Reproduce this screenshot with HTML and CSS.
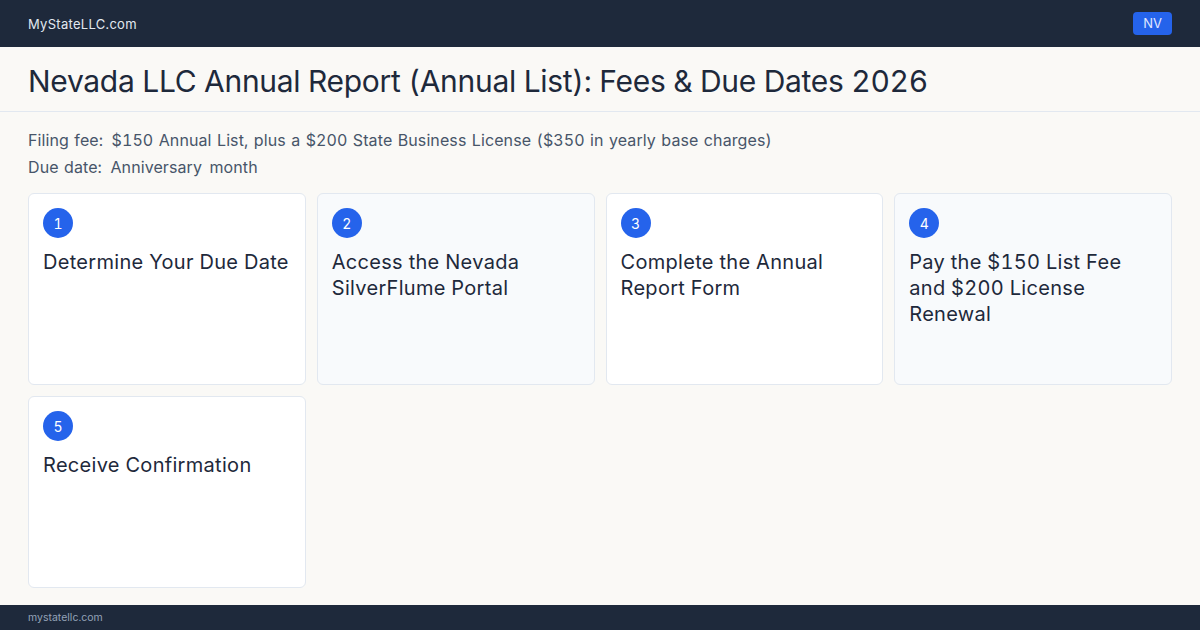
FILE: index.html
```html
<!DOCTYPE html>
<html lang="en">
<head>
  <meta charset="UTF-8"/>
  <meta name="viewport" content="width=device-width,initial-scale=1.0"/>
  <title>Nevada LLC Annual Report</title>
  <link rel="stylesheet" href="styles.css">
</head>
<body>

  <!-- TOP BAR -->
  <header class="topbar">
    <span class="brand">MyStateLLC.com</span>
    <span class="state-tag">NV</span>
  </header>

  <div class="page-title">
    <h1>Nevada LLC Annual Report (Annual List): Fees &amp; Due Dates 2026</h1>
  </div>

  <main>
    <div class="facts">
      <p><span class="label">Filing fee:</span> <span>$150 Annual List, plus a $200 State Business License ($350 in yearly base charges)</span></p>
      <p><span class="label">Due date:</span> <span class="wide">Anniversary month</span></p>
    </div>

    <!-- STEPS -->
    <div class="steps">
      <div class="step"><span class="num">1</span><h3>Determine Your Due Date</h3></div>
      <div class="step alt"><span class="num">2</span><h3>Access the Nevada SilverFlume Portal</h3></div>
      <div class="step"><span class="num">3</span><h3>Complete the Annual Report Form</h3></div>
      <div class="step alt"><span class="num">4</span><h3>Pay the $150 List Fee and $200 License Renewal</h3></div>
      <div class="step"><span class="num">5</span><h3>Receive Confirmation</h3></div>
    </div>
  </main>

  <footer>mystatellc.com</footer>

</body>
</html>
```

FILE: styles.css
```css
* { box-sizing:border-box; }
html, body { height:100%; }
body {
  margin:0;
  font-family: Inter, "Noto Sans", sans-serif;
  font-variant-numeric: tabular-nums;
  background:#faf9f6;
  color:#1e293b;
  display:flex;
  flex-direction:column;
  overflow:hidden;
}
.topbar {
  height:47px;
  background:#1e293b;
  display:flex; align-items:center; justify-content:space-between;
  padding:0 28px;
}
.brand { color:#e2e8f0; font-size:13px; letter-spacing:.3px; }
.state-tag {
  background:#2563eb; color:#e0e7ff;
  font-size:13px; line-height:23px;
  padding:0 10px; border-radius:4px;
}
.page-title { padding:16px 28px 11px; border-bottom:1px solid #e2e8f0; }
.page-title h1 { margin:0; font-size:30px; line-height:37px; font-weight:400; letter-spacing:-.3px; color:#1e293b; }

main { flex:1; padding:15px 28px 0; }
.facts p { margin:0; font-size:16px; line-height:27px; color:#475569; letter-spacing:.1px; word-spacing:1px; }
.facts .label { margin-right:3px; }
.facts .wide { word-spacing:3px; }

.steps {
  display:grid;
  grid-template-columns:repeat(4,1fr);
  gap:11px;
  margin-top:12px;
}
.step {
  min-height:192px;
  background:#fff;
  border:1px solid #e2e8f0;
  border-radius:6px;
  padding:14px 14px;
}
.step.alt { background:#f8fafc; }
.num {
  display:flex; align-items:center; justify-content:center;
  width:30px; height:30px; border-radius:50%;
  background:#2563eb; color:#fff; font-size:14px;
}
.step h3 { margin:11px 0 0; font-size:20px; line-height:26px; font-weight:400; letter-spacing:.3px; color:#1e293b; }

footer {
  height:25px;
  background:#1e293b; color:#94a3b8;
  font-size:10.5px; line-height:25px;
  padding:0 28px;
}
```
